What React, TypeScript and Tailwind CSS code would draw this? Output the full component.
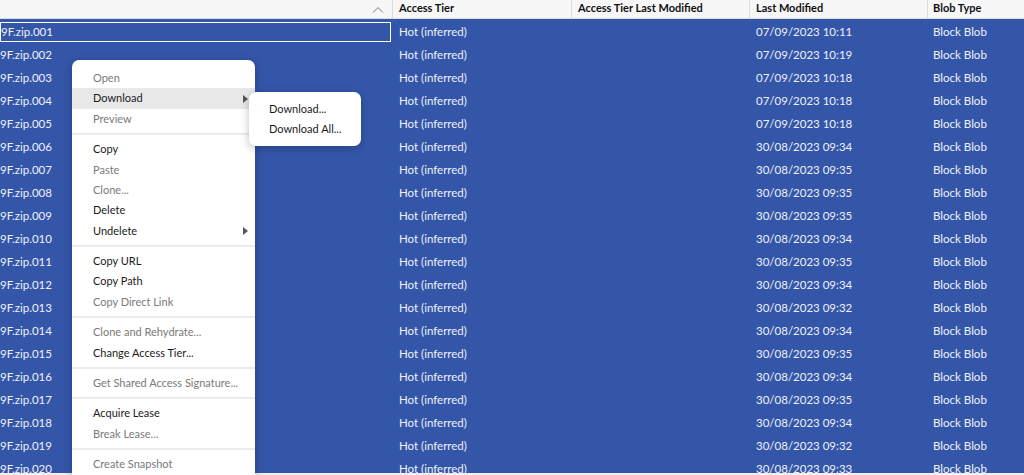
const rows = [
  { name: '9F.zip.001', modified: '07/09/2023 10:11' },
  { name: '9F.zip.002', modified: '07/09/2023 10:19' },
  { name: '9F.zip.003', modified: '07/09/2023 10:18' },
  { name: '9F.zip.004', modified: '07/09/2023 10:18' },
  { name: '9F.zip.005', modified: '07/09/2023 10:18' },
  { name: '9F.zip.006', modified: '30/08/2023 09:34' },
  { name: '9F.zip.007', modified: '30/08/2023 09:35' },
  { name: '9F.zip.008', modified: '30/08/2023 09:35' },
  { name: '9F.zip.009', modified: '30/08/2023 09:35' },
  { name: '9F.zip.010', modified: '30/08/2023 09:34' },
  { name: '9F.zip.011', modified: '30/08/2023 09:35' },
  { name: '9F.zip.012', modified: '30/08/2023 09:34' },
  { name: '9F.zip.013', modified: '30/08/2023 09:32' },
  { name: '9F.zip.014', modified: '30/08/2023 09:34' },
  { name: '9F.zip.015', modified: '30/08/2023 09:35' },
  { name: '9F.zip.016', modified: '30/08/2023 09:34' },
  { name: '9F.zip.017', modified: '30/08/2023 09:35' },
  { name: '9F.zip.018', modified: '30/08/2023 09:34' },
  { name: '9F.zip.019', modified: '30/08/2023 09:32' },
  { name: '9F.zip.020', modified: '30/08/2023 09:33' },
]

type MenuItem = { label: string; disabled?: boolean; sub?: boolean; active?: boolean } | 'sep'

const menu: MenuItem[] = [
  { label: 'Open', disabled: true },
  { label: 'Download', sub: true, active: true },
  { label: 'Preview', disabled: true },
  'sep',
  { label: 'Copy' },
  { label: 'Paste', disabled: true },
  { label: 'Clone...', disabled: true },
  { label: 'Delete' },
  { label: 'Undelete', sub: true },
  'sep',
  { label: 'Copy URL' },
  { label: 'Copy Path' },
  { label: 'Copy Direct Link', disabled: true },
  'sep',
  { label: 'Clone and Rehydrate...', disabled: true },
  { label: 'Change Access Tier...' },
  'sep',
  { label: 'Get Shared Access Signature...', disabled: true },
  'sep',
  { label: 'Acquire Lease' },
  { label: 'Break Lease...', disabled: true },
  'sep',
  { label: 'Create Snapshot', disabled: true },
]

const cols = 'grid grid-cols-[392px_179px_178px_178px_97px]'

export default function App() {
  return (
    <div className="relative flex h-[475px] w-[1024px] flex-col overflow-hidden bg-[#f0f0f0] font-['Lato',sans-serif]">
      {/* header */}
      <div className={`${cols} h-[19px] shrink-0 border-b border-[#dcdcdc] bg-[#f7f7f7] text-[11px] font-bold leading-[16px] text-[#111]`}>
        <div className="flex items-center justify-end pr-[8px]">
          <svg width="12" height="7" viewBox="0 0 12 7" fill="none" stroke="#777" strokeWidth="1">
            <path d="M1 6.5 6 1.5l5 5" />
          </svg>
        </div>
        <div className="border-l border-[#dcdcdc] pl-[6px]">Access Tier</div>
        <div className="border-l border-[#dcdcdc] pl-[6px]">Access Tier Last Modified</div>
        <div className="border-l border-[#dcdcdc] pl-[6px]">Last Modified</div>
        <div className="border-l border-[#dcdcdc] pl-[5px]">Blob Type</div>
      </div>

      {/* rows */}
      <div className="h-[454px] shrink-0 overflow-hidden bg-[#3456a9] pt-[1px] text-[11.5px] text-[#eef1f8]">
        {rows.map((r, i) => (
          <div key={r.name} className={`${cols} h-[23px] items-center`}>
            <div className="flex h-full items-center">
              {i === 0 ? (
                <div className="flex h-[20px] w-[391px] items-center border border-white">{r.name}</div>
              ) : (
                r.name
              )}
            </div>
            <div className="pl-[7px]">Hot (inferred)</div>
            <div />
            <div className="pl-[7px]">{r.modified}</div>
            <div className="pl-[6px]">Block Blob</div>
          </div>
        ))}
      </div>

      {/* context menu */}
      <div className="absolute left-[72px] top-[60px] w-[183px] rounded-[7px] bg-white pt-[8px] pb-[8px] text-[11px] shadow-[0_2px_8px_rgba(0,0,0,0.25)]">
        {menu.map((m, i) =>
          m === 'sep' ? (
            <div key={i} className="flex h-[10px] items-center">
              <div className="h-[2px] w-full bg-[#ebebeb]" />
            </div>
          ) : (
            <div
              key={i}
              className={`flex h-[20.4px] items-center justify-between pl-[21px] pr-[7px] ${m.active ? 'bg-[#e8e8e8]' : ''} ${m.disabled ? 'text-[#7a7a7a]' : 'text-[#1b1b1b]'}`}
            >
              <span>{m.label}</span>
              {m.sub && (
                <svg width="5" height="8" viewBox="0 0 5 8">
                  <path d="M0 0 5 4 0 8z" fill="#555" />
                </svg>
              )}
            </div>
          ),
        )}
      </div>

      {/* submenu */}
      <div className="absolute left-[249px] top-[92px] w-[112px] rounded-[7px] bg-white py-[7px] text-[11px] text-[#1b1b1b] shadow-[0_2px_8px_rgba(0,0,0,0.25)]">
        <div className="flex h-[20px] items-center pl-[20px]">Download...</div>
        <div className="flex h-[20px] items-center pl-[20px]">Download All...</div>
      </div>
    </div>
  )
}
